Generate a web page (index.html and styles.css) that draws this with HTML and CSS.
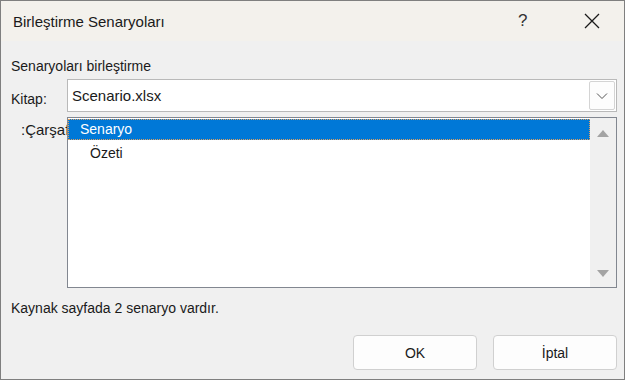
FILE: index.html
```html
<!DOCTYPE html>
<html lang="tr">
<head>
    <meta charset="UTF-8">
    <title>Birleştirme Senaryoları</title>
    <link rel="stylesheet" href="styles.css">
</head>
<body>
    <div class="window">
        <!-- Başlık çubuğu -->
        <div class="titlebar">
            <span class="title">Birleştirme Senaryoları</span>
            <span class="help">?</span>
            <span class="close">
                <svg width="16" height="16" viewBox="0 0 16 16"><path d="M1 1 L15 15 M15 1 L1 15" stroke="#1a1a1a" stroke-width="1.3" fill="none"/></svg>
            </span>
        </div>

        <div class="content">
            <div class="heading">Senaryoları birleştirme</div>

            <div class="row">
                <label class="label">Kitap:</label>
                <div class="combo">
                    <span class="combo-text">Scenario.xlsx</span>
                    <span class="combo-btn">
                        <svg width="12" height="8" viewBox="0 0 12 8"><path d="M1 1.5 L6 6.5 L11 1.5" stroke="#555" stroke-width="1" fill="none"/></svg>
                    </span>
                </div>
            </div>

            <div class="row sheet-row">
                <label class="label sheet-label">:Çarşaf</label>
                <div class="list">
                    <div class="items">
                        <div class="item selected">Senaryo</div>
                        <div class="item sub">Özeti</div>
                    </div>
                    <div class="scrollbar">
                        <span class="arrow up"></span>
                        <span class="arrow down"></span>
                    </div>
                </div>
            </div>

            <div class="status">Kaynak sayfada 2 senaryo vardır.</div>

            <div class="buttons">
                <button class="btn">OK</button>
                <button class="btn">İptal</button>
            </div>
        </div>
    </div>
</body>
</html>
```

FILE: styles.css
```css
body {
    margin: 0;
    background: #ffffff;
    font-family: 'Liberation Sans', Arial, sans-serif;
    color: #1a1a1a;
}

.window {
    width: 623px;
    height: 378px;
    border: 1px solid #7f7f7f;
    background: #f0f0f0;
    display: flex;
    flex-direction: column;
}

/* Başlık çubuğu */
.titlebar {
    height: 40px;
    background: #f3f1ec;
    display: flex;
    align-items: center;
    padding-left: 12px;
    flex-shrink: 0;
}

.title {
    font-size: 15px;
    flex: 1;
    padding-top: 1px;
}

.help {
    font-size: 17px;
    color: #333;
    width: 20px;
    margin-right: 46px;
}

.close {
    display: flex;
    width: 16px;
    margin-right: 24px;
}

/* İçerik */
.content {
    flex: 1;
    padding: 0 7px 0 10px;
    display: flex;
    flex-direction: column;
}

.heading {
    font-size: 14px;
    margin-top: 17px;
    height: 21px;
}

.row {
    display: flex;
}

.label {
    width: 56px;
    flex-shrink: 0;
    font-size: 14px;
    padding-top: 12px;
}

.combo {
    flex: 1;
    height: 31px;
    border: 1px solid #b9b9b9;
    background: #fff;
    display: flex;
    align-items: center;
}

.combo-text {
    flex: 1;
    font-size: 15px;
    padding-left: 4px;
}

.combo-btn {
    width: 24px;
    height: 27px;
    margin-right: 1px;
    border: 1px solid #d4d4d4;
    border-radius: 2px;
    background: #fdfdfd;
    display: flex;
    align-items: center;
    justify-content: center;
}

.sheet-row {
    margin-top: 5px;
}

.sheet-label {
    font-size: 15px;
    padding-top: 4px;
    padding-left: 10px;
    width: 46px;
    white-space: nowrap;
}

.list {
    flex: 1;
    height: 169px;
    border: 1px solid #828790;
    background: #fff;
    display: flex;
}

.items {
    flex: 1;
    padding-top: 1px;
}

.item {
    height: 21px;
    line-height: 21px;
    font-size: 14px;
    padding-left: 12px;
}

.item.selected {
    background: #0078d7;
    color: #fff;
    outline: 1px dotted #e0a060;
    outline-offset: -1px;
}

.item.sub {
    padding-left: 22px;
    margin-top: 3px;
}

.scrollbar {
    width: 26px;
    background: #f0f0f0;
    display: flex;
    flex-direction: column;
    justify-content: space-between;
    align-items: center;
    padding: 12px 0 10px;
}

.arrow {
    width: 0;
    height: 0;
    border-left: 6px solid transparent;
    border-right: 6px solid transparent;
}

.arrow.up {
    border-bottom: 7px solid #a3a3a3;
}

.arrow.down {
    border-top: 7px solid #a3a3a3;
}

.status {
    font-size: 14px;
    margin-top: 12px;
}

.buttons {
    display: flex;
    justify-content: flex-end;
    gap: 16px;
    margin-top: 19px;
}

.btn {
    width: 124px;
    height: 35px;
    background: #fdfdfd;
    border: 1px solid #d0d0d0;
    border-radius: 4px;
    font-family: inherit;
    font-size: 14px;
    color: #1a1a1a;
}
```
